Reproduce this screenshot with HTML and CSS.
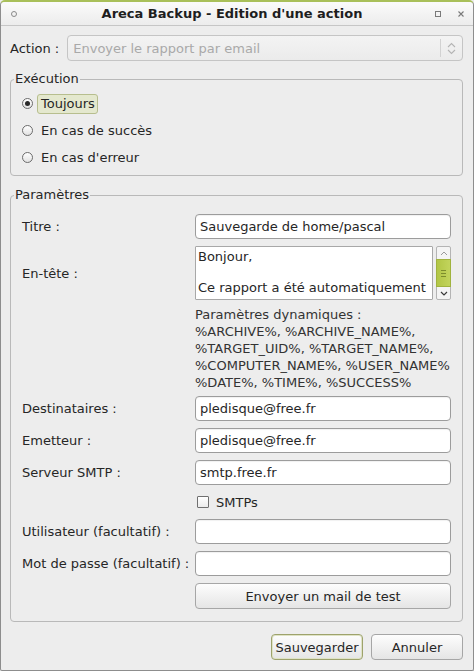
FILE: index.html
```html
<!DOCTYPE html>
<html lang="fr">
<head>
    <meta charset="UTF-8">
    <title>Areca Backup - Edition d'une action</title>
    <link rel="stylesheet" href="styles.css">
</head>
<body>
    <div class="window">
        <div class="titlebar">
            <span class="tb-menu"></span>
            <div class="tb-title">Areca Backup - Edition d'une action</div>
            <div class="tb-buttons">
                <span class="tb-max"></span>
                <svg class="tb-close" width="6" height="6" viewBox="0 0 6 6"><path d="M0.5 0.5 L5.5 5.5 M5.5 0.5 L0.5 5.5" stroke="#7a7a7a" stroke-width="1.1"/></svg>
            </div>
        </div>

        <div class="content">
            <div class="action-row">
                <span class="label">Action :</span>
                <div class="combo">
                    <span class="combo-text">Envoyer le rapport par email</span>
                    <span class="combo-arrow">
                        <svg width="9" height="13" viewBox="0 0 9 13"><path d="M1 5 L4.5 1.5 L8 5 M1 8 L4.5 11.5 L8 8" fill="none" stroke="#b4b4b4" stroke-width="1.1"/></svg>
                    </span>
                </div>
            </div>

            <!-- conditions d'exécution -->
            <fieldset class="group exec">
                <legend>Exécution</legend>
                <div class="radio checked"><span class="radio-mark"></span><span class="radio-text focus">Toujours</span></div>
                <div class="radio"><span class="radio-mark"></span><span class="radio-text">En cas de succès</span></div>
                <div class="radio"><span class="radio-mark"></span><span class="radio-text">En cas d'erreur</span></div>
            </fieldset>

            <!-- paramètres du mail -->
            <fieldset class="group params">
                <legend>Paramètres</legend>
                <div class="form-grid">
                    <span class="label">Titre :</span>
                    <div class="input">Sauvegarde de home/pascal</div>

                    <span class="label">En-tête :</span>
                    <div class="textarea-wrap">
                        <div class="textarea">Bonjour,<br><br>Ce rapport a été automatiquement</div>
                        <div class="scrollbar">
                            <span class="sb-btn">
                                <svg width="8" height="5" viewBox="0 0 8 5"><path d="M1 4 L4 1 L7 4" fill="none" stroke="#9a9a9a" stroke-width="1"/></svg>
                            </span>
                            <span class="sb-thumb"><span class="grip"></span></span>
                            <span class="sb-btn">
                                <svg width="8" height="5" viewBox="0 0 8 5"><path d="M1 1 L4 4 L7 1" fill="none" stroke="#3a3a3a" stroke-width="1.2"/></svg>
                            </span>
                        </div>
                    </div>

                    <div class="dyn-params">Paramètres dynamiques :<br>%ARCHIVE%, %ARCHIVE_NAME%,<br>%TARGET_UID%, %TARGET_NAME%,<br>%COMPUTER_NAME%, %USER_NAME%<br>%DATE%, %TIME%, %SUCCESS%</div>

                    <span class="label">Destinataires :</span>
                    <div class="input">pledisque@free.fr</div>

                    <span class="label">Emetteur :</span>
                    <div class="input">pledisque@free.fr</div>

                    <span class="label">Serveur SMTP :</span>
                    <div class="input">smtp.free.fr</div>

                    <div class="checkbox-row"><span class="checkbox"></span>SMTPs</div>

                    <span class="label">Utilisateur (facultatif) :</span>
                    <div class="input"></div>

                    <span class="label">Mot de passe (facultatif) :</span>
                    <div class="input"></div>

                    <button class="btn test-btn">Envoyer un mail de test</button>
                </div>
            </fieldset>

            <div class="dialog-buttons">
                <button class="btn default">Sauvegarder</button>
                <button class="btn">Annuler</button>
            </div>
        </div>
    </div>
</body>
</html>
```

FILE: styles.css
```css
:root {
    --bg: #ededed;
    --text: #262626;
    --border: #9c9c9c;
    --group-border: #b9b9b9;
    --accent: #a9c05a;
}

html, body {
    margin: 0;
    padding: 0;
}

body {
    background: var(--bg);
    font-family: "DejaVu Sans", "Noto Sans", sans-serif;
    font-size: 13px;
    color: var(--text);
}

/* fenêtre */
.window {
    box-sizing: border-box;
    width: 474px;
    height: 671px;
    border: 1px solid #8d8d8d;
    border-top: 2px solid var(--accent);
    border-radius: 5px 5px 2px 2px;
    background: var(--bg);
    display: flex;
    flex-direction: column;
}

.titlebar {
    box-sizing: border-box;
    height: 24px;
    display: grid;
    grid-template-columns: 30px 1fr 40px;
    align-items: center;
    background: linear-gradient(#fbfbfb, #ececec);
    border-bottom: 1px solid #c6c6c6;
    border-radius: 4px 4px 0 0;
}

.tb-menu {
    width: 4px;
    height: 4px;
    margin-left: 10px;
    border: 1px solid #8a8a8a;
    border-radius: 50%;
}

.tb-title {
    text-align: center;
    font-weight: bold;
    font-size: 13px;
    color: #1e1e1e;
}

.tb-buttons {
    display: flex;
    align-items: center;
    justify-content: flex-end;
    gap: 17px;
    padding-right: 9px;
}

.tb-max {
    width: 4px;
    height: 4px;
    border: 1px solid #7a7a7a;
}

.content {
    flex: 1;
    padding: 9px 10px 0 9px;
}

.label {
    display: flex;
    align-items: center;
    white-space: nowrap;
}

/* liste déroulante (désactivée) */
.action-row {
    display: flex;
    gap: 8px;
    height: 26px;
}

.combo {
    flex: 1;
    display: flex;
    align-items: center;
    border: 1px solid #c5c5c5;
    border-radius: 4px;
    background: linear-gradient(#f3f3f3, #ebebeb);
}

.combo-text {
    flex: 1;
    padding-left: 5px;
    color: #a9a9a9;
}

.combo-arrow {
    width: 21px;
    height: 18px;
    border-left: 1px solid #d2d2d2;
    display: flex;
    align-items: center;
    justify-content: center;
}

/* groupes */
.group {
    margin: 0;
    border: 1px solid var(--group-border);
    border-radius: 4px;
    min-width: 0;
}

.group legend {
    line-height: 16px;
    padding: 0 1px;
    margin-left: -8px;
}

.exec {
    margin-top: 10px;
    padding: 3px 11px 4px 11px;
}

.radio {
    height: 27px;
    display: flex;
    align-items: center;
}

.radio-mark {
    box-sizing: border-box;
    width: 11px;
    height: 11px;
    border: 1px solid #6c6c6c;
    border-radius: 50%;
    background: linear-gradient(#ffffff, #e2e2e2);
    display: flex;
    align-items: center;
    justify-content: center;
}

.radio.checked .radio-mark::after {
    content: "";
    width: 5px;
    height: 5px;
    border-radius: 50%;
    background: #2a2a2a;
}

.radio-text {
    margin-left: 4px;
    padding: 1px 2px 2px 3px;
    border: 1px solid transparent;
}

.radio-text.focus {
    background: #e4e8ce;
    border-color: #b7be8e;
    border-radius: 3px;
}

.params {
    margin-top: 11px;
    padding: 11px 11px 12px 11px;
}

.form-grid {
    display: grid;
    grid-template-columns: 173px 1fr;
    row-gap: 7px;
}

.input {
    box-sizing: border-box;
    height: 25px;
    padding: 0 4px;
    display: flex;
    align-items: center;
    background: #fff;
    border: 1px solid var(--border);
    border-radius: 4px;
    box-shadow: inset 0 1px 1px rgba(0, 0, 0, 0.06);
}

.textarea-wrap {
    display: flex;
    gap: 3px;
    height: 54px;
}

.textarea {
    flex: 1;
    box-sizing: border-box;
    padding: 2px 2px;
    line-height: 15.5px;
    background: #fff;
    border: 1px solid #a8a8a8;
    border-radius: 1px;
    overflow: hidden;
    white-space: nowrap;
}

.scrollbar {
    box-sizing: border-box;
    width: 15px;
    display: flex;
    flex-direction: column;
    border: 1px solid #b4b4b4;
    border-radius: 2px;
    background: #f4f4f4;
}

.sb-btn {
    height: 12px;
    display: flex;
    align-items: center;
    justify-content: center;
}

.sb-thumb {
    flex: 1;
    margin: 0 -1px;
    background: linear-gradient(90deg, #b2c646, #c2d45c);
    border: 1px solid #a0b33e;
    display: flex;
    align-items: center;
    justify-content: center;
}

.grip {
    width: 5px;
    height: 5px;
    border-top: 1px solid #7c8d2c;
    border-bottom: 1px solid #7c8d2c;
    background: linear-gradient(#7c8d2c, #7c8d2c) center / 100% 1px no-repeat;
}

.dyn-params {
    grid-column: 2;
    line-height: 17px;
    margin: -1px 0 -2px;
    color: #333;
    white-space: nowrap;
}

.checkbox-row {
    grid-column: 2;
    height: 20px;
    display: flex;
    align-items: center;
    gap: 7px;
    padding-left: 2px;
}

.checkbox {
    box-sizing: border-box;
    width: 12px;
    height: 12px;
    border: 1px solid #707070;
    border-radius: 1px;
    background: linear-gradient(#ffffff, #ececec);
}

/* boutons */
.btn {
    box-sizing: border-box;
    height: 26px;
    font-family: inherit;
    font-size: 13px;
    color: var(--text);
    border: 1px solid #a6a6a6;
    border-radius: 4px;
    background: linear-gradient(#fdfdfd, #e5e5e5);
    padding: 0;
}

.test-btn {
    grid-column: 2;
}

.dialog-buttons {
    margin-top: 12px;
    display: flex;
    justify-content: flex-end;
    gap: 8px;
}

.dialog-buttons .btn {
    width: 92px;
}

.btn.default {
    border-color: #9ea36c;
    box-shadow: inset 0 0 0 1px #dfe3c6;
}
```
